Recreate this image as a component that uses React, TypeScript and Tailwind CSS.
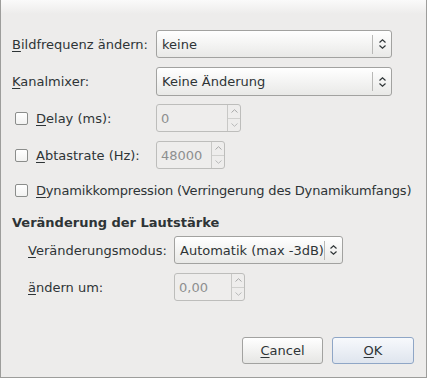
import React from "react";

function U({ children }: { children: React.ReactNode }) {
  return <span className="underline decoration-1 underline-offset-[2px]">{children}</span>;
}

function ComboArrow() {
  return (
    <svg width="7" height="10" viewBox="0 0 7 10" className="shrink-0">
      <path d="M0.5 3.5 L3.5 0.8 L6.5 3.5 M0.5 6.5 L3.5 9.2 L6.5 6.5" fill="none" stroke="#2e3436" strokeWidth="1.2" />
    </svg>
  );
}

function Combo({ value, width }: { value: string; width: string }) {
  return (
    <div
      className={`${width} h-full flex items-center rounded-[3px] border border-[#a2a2a0] bg-gradient-to-b from-white to-[#e9e9e7] text-[#2e3436] whitespace-nowrap`}
    >
      <span className="flex-1 pl-[5px]">{value}</span>
      <div className="w-px h-[19px] bg-[#b8b8b6]" />
      <div className="w-[18px] flex justify-center">
        <ComboArrow />
      </div>
    </div>
  );
}

function Spin({ value, width }: { value: string; width: string }) {
  return (
    <div
      className={`${width} h-full flex rounded-[3px] border border-[#bdbdbb] bg-[#eeedec] text-[#8d8f8f]`}
    >
      <span className="flex-1 flex items-center pl-[4px]">{value}</span>
      <div className="w-[13px] flex flex-col border-l border-[#c8c8c6]">
        <div className="flex-1 flex items-center justify-center border-b border-[#d0d0ce]">
          <svg width="7" height="4" viewBox="0 0 7 4">
            <path d="M0.5 3.5 L3.5 0.7 L6.5 3.5" fill="none" stroke="#a8a9a9" strokeWidth="1" />
          </svg>
        </div>
        <div className="flex-1 flex items-center justify-center">
          <svg width="7" height="4" viewBox="0 0 7 4">
            <path d="M0.5 0.5 L3.5 3.3 L6.5 0.5" fill="none" stroke="#b8b9b9" strokeWidth="1" />
          </svg>
        </div>
      </div>
    </div>
  );
}

function Check() {
  return <div className="w-[13px] h-[13px] shrink-0 rounded-[2px] border border-[#8b8d8b] bg-gradient-to-b from-white to-[#f2f2f1]" />;
}

export default function App() {
  return (
    <div
      className="w-[427px] h-[378px] flex flex-col border-x border-b border-[#9d9d9b] bg-[#edeceb] text-[13px] text-[#2e3436] leading-none whitespace-nowrap"
      style={{ fontFamily: '"DejaVu Sans", sans-serif' }}
    >
      <div className="h-[14px] shrink-0 bg-gradient-to-b from-[#fafafa] to-[#edeceb]" />
      <div className="flex flex-col pl-[11px] pr-[12px] pt-[16px]">
        <div className="flex items-center h-[28px]">
          <span className="w-[144px]">
            <U>B</U>ildfrequenz ändern:
          </span>
          <Combo value="keine" width="w-[236px]" />
        </div>
        <div className="flex items-center h-[29px] mt-[9px]">
          <span className="w-[144px]">
            <U>K</U>analmixer:
          </span>
          <Combo value="Keine Änderung" width="w-[236px]" />
        </div>
        <div className="flex items-center h-[28px] mt-[8px]">
          <div className="w-[144px] flex items-center gap-[8px] pl-[3px]">
            <Check />
            <span>
              <U>D</U>elay (ms):
            </span>
          </div>
          <Spin value="0" width="w-[85px]" />
        </div>
        <div className="flex items-center h-[28px] mt-[9px]">
          <div className="w-[144px] flex items-center gap-[8px] pl-[3px]">
            <Check />
            <span>
              <U>A</U>btastrate (Hz):
            </span>
          </div>
          <Spin value="48000" width="w-[69px]" />
        </div>
        <div className="flex items-center h-[29px] mt-[7px] gap-[8px] pl-[3px]">
          <Check />
          <span className="tracking-[-0.17px]">
            <U>D</U>ynamikkompression (Verringerung des Dynamikumfangs)
          </span>
        </div>
        <div className="mt-[9px] font-bold h-[16px] flex items-center">Veränderung der Lautstärke</div>
        <div className="flex items-center h-[28px] mt-[6px] pl-[16px]">
          <span className="w-[146px]">
            <U>V</U>eränderungsmodus:
          </span>
          <Combo value="Automatik (max -3dB)" width="w-[169px]" />
        </div>
        <div className="flex items-center h-[28px] mt-[9px] pl-[16px]">
          <span className="w-[146px]">
            <U>ä</U>ndern um:
          </span>
          <Spin value="0,00" width="w-[71px]" />
        </div>
      </div>
      <div className="flex justify-end gap-[9px] mt-auto mb-[13px] pr-[12px]">
        <button className="w-[81px] h-[27px] rounded-[3px] border border-[#a2a2a0] bg-gradient-to-b from-white to-[#e6e6e4] text-[#2e3436]">
          <U>C</U>ancel
        </button>
        <button className="w-[82px] h-[27px] rounded-[3px] border border-[#8fa6c6] bg-gradient-to-b from-[#f7f9fc] to-[#dfe5ee] text-[#2e3436]">
          <U>O</U>K
        </button>
      </div>
    </div>
  );
}
